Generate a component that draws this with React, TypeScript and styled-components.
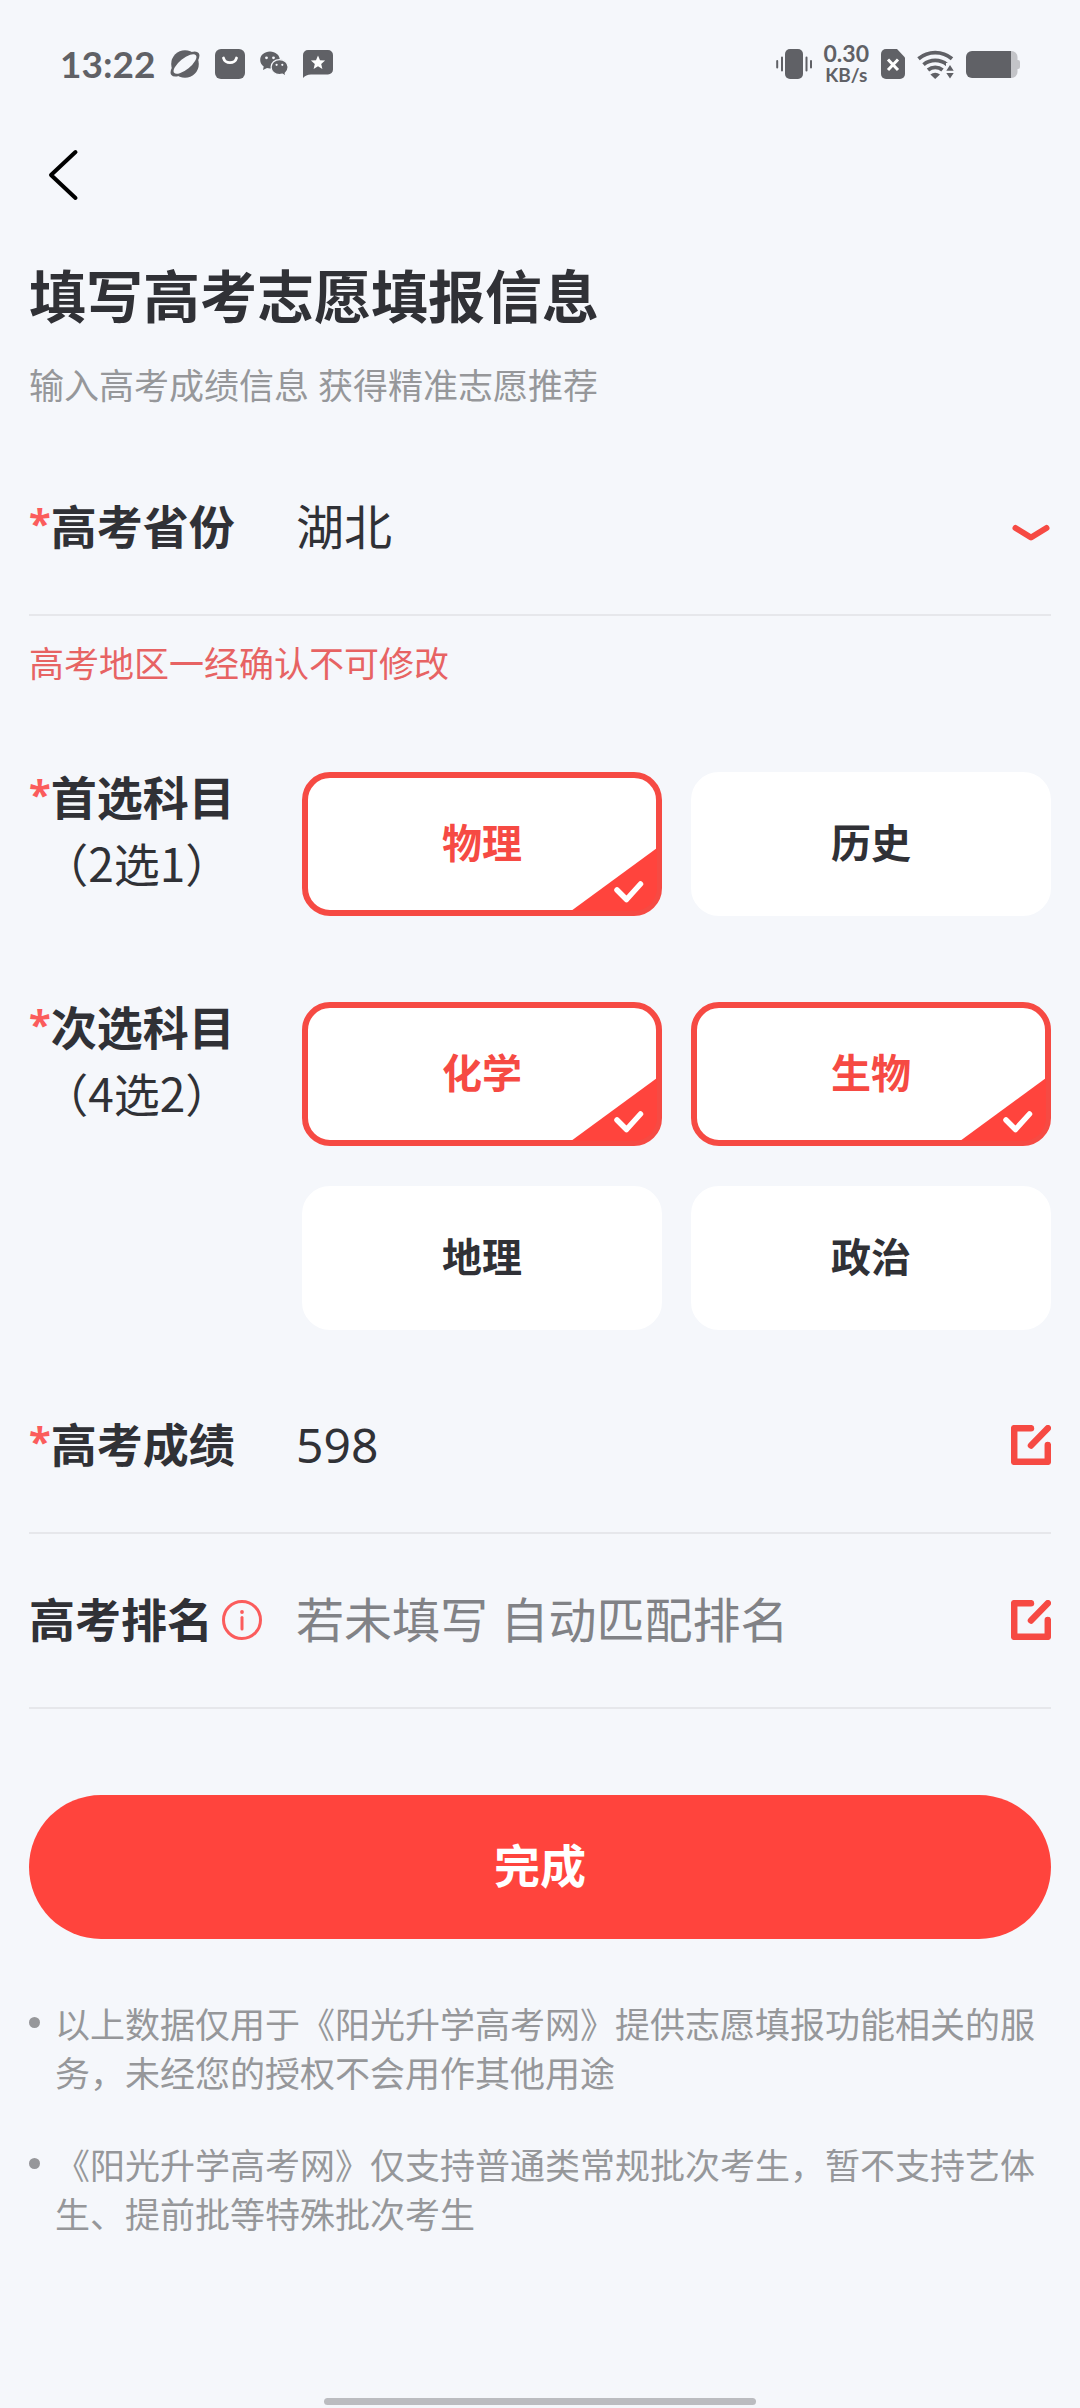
import React, { useRef, useState } from "react";
import styled, { createGlobalStyle } from "styled-components";

const color = {
  page: "#f5f7fb",
  ink: "#303136",
  muted: "#96979a",
  placeholder: "#818286",
  status: "#606166",
  line: "#e6e7eb",
  brand: "#ff443d",
  outline: "#f64a43",
  star: "#fb5c5c",
  warning: "#e76363",
};

const GlobalStyle = createGlobalStyle`
  *, *::before, *::after { box-sizing: border-box; }
  body {
    margin: 0;
    background: ${color.page};
    color: ${color.ink};
    font-family: "Noto Sans", "Noto Sans CJK SC", sans-serif;
  }
  button, input, select { font: inherit; color: inherit; }
`;

const Page = styled.div`
  display: flex;
  flex-direction: column;
  min-height: 100vh;
`;

const StatusBar = styled.div`
  display: flex;
  align-items: center;
  justify-content: space-between;
  height: 128px;
  padding: 0 60px;
  color: ${color.status};
  font-family: Lato, "Noto Sans", sans-serif;
  font-weight: 700;
`;

const StatusGroup = styled.div<{ $gap: number }>`
  display: flex;
  align-items: center;
  gap: ${(p) => p.$gap}px;

  svg { display: block; }
`;

const Clock = styled.time`
  font-size: 37px;
  line-height: 40px;
`;

const NetSpeed = styled.div`
  display: flex;
  flex-direction: column;
  align-items: center;
`;

const SpeedValue = styled.span`
  font-size: 23px;
  line-height: 21px;
`;

const SpeedUnit = styled.span`
  font-size: 19px;
  line-height: 21px;
`;

const NavBar = styled.nav`
  display: flex;
  align-items: center;
  height: 94px;
  padding: 0 40px;
`;

const IconButton = styled.button`
  display: block;
  flex: none;
  padding: 0;
  border: 0;
  background: none;
  cursor: pointer;

  svg { display: block; }
`;

const Content = styled.main`
  padding: 34px 29px 0;
`;

const Title = styled.h1`
  margin: 0;
  font-size: 57px;
  line-height: 80px;
  font-weight: 700;
`;

const Subtitle = styled.p`
  margin: 24px 0 0;
  font-size: 35px;
  line-height: 52px;
  color: ${color.muted};
`;

const Form = styled.form`
  margin: 29px 0 0;
`;

const Row = styled.div`
  display: flex;
  align-items: center;
  height: 175px;
  padding-bottom: 2px;
  border-bottom: 2px solid ${color.line};
`;

const LabelCell = styled.div`
  display: flex;
  flex: none;
  align-items: center;
  gap: 9px;
  width: 267px;
`;

const Label = styled.label`
  font-size: 46px;
  line-height: 65px;
  font-weight: 700;
`;

const Star = styled.span`
  font-size: 40px;
  line-height: 40px;
  vertical-align: 6px;
  color: ${color.star};
`;

const fieldStyle = `
  flex: 1;
  min-width: 0;
  height: 72px;
  padding: 0;
  border: 0;
  outline: 0;
  background: transparent;
  font-size: 48px;
  line-height: 72px;
`;

const Field = styled.input`
  ${fieldStyle}
  &::placeholder { color: ${color.placeholder}; opacity: 1; }
`;

const Picker = styled.div`
  position: relative;
  display: flex;
  flex: 1;
  align-items: center;
`;

const Select = styled.select`
  ${fieldStyle}
  appearance: none;
`;

const Chevron = styled.svg`
  position: absolute;
  right: 0;
  top: 21px;
  pointer-events: none;
`;

const Warning = styled.p`
  margin: 22px 0 0;
  font-size: 35px;
  line-height: 52px;
  color: ${color.warning};
`;

const SubjectGroup = styled.fieldset<{ $top: number }>`
  display: grid;
  grid-template-columns: 273px 1fr;
  margin: ${(p) => p.$top}px 0 0;
  padding: 0;
  border: 0;
`;

const SubjectLabel = styled.div`
  justify-self: start;
  display: flex;
  flex-direction: column;
  align-items: center;
  margin-top: -7px;
  font-size: 46px;
  line-height: 65px;
`;

const GroupName = styled.span`
  font-weight: 700;
`;

const GroupHint = styled.span`
  padding-left: 10px;
  font-family: "Noto Sans CJK SC", sans-serif;
`;

const Options = styled.div`
  display: grid;
  grid-template-columns: 1fr 1fr;
  gap: 40px 29px;
`;

const Option = styled.label<{ $checked: boolean }>`
  position: relative;
  display: flex;
  align-items: center;
  justify-content: center;
  height: 144px;
  padding-bottom: 2px;
  border: 6px solid ${(p) => (p.$checked ? color.outline : "#ffffff")};
  border-radius: 28px;
  background: #ffffff;
  color: ${(p) => (p.$checked ? color.outline : color.ink)};
  font-size: 40px;
  line-height: 56px;
  font-weight: 700;
  cursor: pointer;
`;

const OptionInput = styled.input`
  position: absolute;
  inset: 0;
  width: 100%;
  height: 100%;
  margin: 0;
  opacity: 0;
`;

const Corner = styled.svg`
  position: absolute;
  right: -1px;
  bottom: -1px;
  border-bottom-right-radius: 23px;
`;

const ScoreRows = styled.div`
  margin-top: 29px;
`;

const Submit = styled.button`
  display: block;
  width: 100%;
  height: 144px;
  margin-top: 86px;
  padding: 0 0 4px;
  border: 0;
  border-radius: 72px;
  background: ${color.brand};
  color: #ffffff;
  font-size: 46px;
  line-height: 65px;
  font-weight: 700;
  cursor: pointer;
`;

const Notes = styled.ul`
  display: flex;
  flex-direction: column;
  gap: 43px;
  margin: 61px 0 0;
  padding: 0;
  list-style: none;
`;

const Note = styled.li`
  display: flex;
  gap: 15px;
  font-size: 35px;
  line-height: 49px;
  color: ${color.muted};

  &::before {
    content: "";
    flex: none;
    width: 11px;
    height: 11px;
    margin-top: 17px;
    border-radius: 50%;
    background: currentColor;
  }
`;

const HomeBar = styled.div`
  width: 40%;
  height: 7px;
  margin: auto auto 3px;
  border-radius: 4px;
  background: #bbbcc0;
`;

const PlanetIcon = () => (
  <svg width="30" height="30" viewBox="0 0 30 30">
    <circle cx="15" cy="15" r="13.8" fill="currentColor" />
    <g transform="rotate(-39 15 15)">
      <ellipse cx="15" cy="15" rx="17.5" ry="7.6" fill="currentColor" />
      <ellipse cx="15" cy="15" rx="14" ry="5.6" fill={color.page} />
    </g>
  </svg>
);

const BagIcon = () => (
  <svg width="30" height="30" viewBox="0 0 30 30">
    <rect width="30" height="30" rx="6" fill="currentColor" />
    <path d="M8.500 9a6.600 5.600 0 0 0 13 0" fill="none" stroke="#fff" strokeWidth="2.8" strokeLinecap="round" />
  </svg>
);

const WechatIcon = () => (
  <svg width="28" height="26" viewBox="0 0 28 26">
    <path d="M10 .6C4.500.6.2 4.200.2 8.900c0 2.700 1.400 5 3.500 6.500L3 19l4-2c1 .3 2 .4 3 .4 5.400 0 9.800-3.800 9.800-8.500S15.400.6 10 .6z" fill="currentColor" />
    <path d="M19.500 8.600c-4.800 0-8.400 3.300-8.400 7.500s3.600 7.500 8.400 7.500c1 0 2-.2 2.900-.4l3.600 2-.8-3c1.800-1.400 2.900-3.600 2.900-6.100 0-4.200-3.800-7.500-8.600-7.500z" fill="currentColor" stroke={color.page} strokeWidth="1.2" />
    <g fill={color.page}>
      <circle cx="6.5" cy="6.8" r="1.4" />
      <circle cx="13.5" cy="6.8" r="1.4" />
      <circle cx="16.6" cy="13.8" r="1.1" />
      <circle cx="22.3" cy="13.8" r="1.1" />
    </g>
  </svg>
);

const StarChatIcon = () => (
  <svg width="30" height="28" viewBox="0 0 30 28">
    <path d="M0 28V5a5 5 0 0 1 5-5h20a5 5 0 0 1 5 5v14.500a5 5 0 0 1-5 5H8C4.500 24.500 2 26 0 28z" fill="currentColor" />
    <path d="M15 5.500l2 4.700 5.100.4-3.900 3.300 1.200 5-4.400-2.700-4.400 2.700 1.200-5-3.900-3.300 5.100-.4z" fill="#fff" />
  </svg>
);

const VibrateIcon = () => (
  <svg width="36" height="30" viewBox="0 0 36 30">
    <rect x="9" y="0" width="18" height="30" rx="5" fill="currentColor" />
    <g fill="none" stroke="currentColor" strokeWidth="2" strokeLinecap="round">
      <path d="M6 8.500v13M1.200 12v6.500M30.500 8.500v13M35 12v6.500" />
    </g>
  </svg>
);

const SimIcon = () => (
  <svg width="24" height="30" viewBox="0 0 24 30">
    <path d="M5 0h11l8 8.500V25a5 5 0 0 1-5 5H5a5 5 0 0 1-5-5V5a5 5 0 0 1 5-5z" fill="currentColor" />
    <path d="M7 10.500l10 10.500M17 10.500l-10 10.500" stroke="#fff" strokeWidth="3" />
  </svg>
);

const WifiIcon = () => (
  <svg width="37" height="29" viewBox="0 0 37 29">
    <g fill="none" stroke="currentColor" strokeWidth="3.8">
      <path d="M1.500 8.800a26 26 0 0 1 33.500 0" />
      <path d="M6.500 14.600a18.500 18.500 0 0 1 23.500 0" />
      <path d="M11 20a11.500 11.500 0 0 1 14.500 0" />
    </g>
    <path d="M18.200 29l-4.800-4.500a7.500 7.500 0 0 1 9.600 0z" fill="currentColor" />
    <path d="M29 13h8v16h-8z" fill={color.page} />
    <path d="M33 15l3.700 5.800h-7.400zM33 28.500l3.700-5.500h-7.400z" fill="currentColor" />
  </svg>
);

const BatteryIcon = () => (
  <svg width="54" height="27" viewBox="0 0 54 27">
    <path d="M44 0h1.500a6 6 0 0 1 6 6v3h.5a2 2 0 0 1 2 2v5a2 2 0 0 1-2 2h-.5v3a6 6 0 0 1-6 6H44z" fill="#c3c4c8" />
    <path d="M6 0h39v27H6a6 6 0 0 1-6-6V6a6 6 0 0 1 6-6z" fill="currentColor" />
  </svg>
);

const EditIcon = () => (
  <svg width="40" height="40" viewBox="0 0 40 40" fill="none" stroke={color.outline} strokeWidth="6.5" strokeLinecap="round" strokeLinejoin="round">
    <path d="M20 3.200H3.200v33.600h33.600V20" />
    <path d="M20 20.500L36.800 3.200" />
  </svg>
);

const InfoIcon = () => (
  <svg width="40" height="40" viewBox="0 0 40 40" fill="none" stroke={color.star}>
    <circle cx="20" cy="20" r="18.5" strokeWidth="3" />
    <path d="M20 17.500v11.500" strokeWidth="3" strokeLinecap="round" />
    <circle cx="20" cy="12" r="1.9" fill={color.star} stroke="none" />
  </svg>
);

const CheckCorner = () => (
  <Corner width="86" height="63" viewBox="0 0 86 63" aria-hidden="true">
    <path d="M86 0v63H0z" fill={color.brand} />
    <path d="M46 42l9.500 9.500 14-15.500" fill="none" stroke="#fff" strokeWidth="5.5" strokeLinecap="round" strokeLinejoin="round" />
  </Corner>
);

type ChoiceProps = {
  type: "radio" | "checkbox";
  name: string;
  text: string;
  checked: boolean;
  onPick: () => void;
};

const Choice = ({ type, name, text, checked, onPick }: ChoiceProps) => (
  <Option $checked={checked}>
    <OptionInput type={type} name={name} value={text} checked={checked} onChange={onPick} />
    {text}
    {checked && <CheckCorner />}
  </Option>
);

const FIRST = ["物理", "历史"];
const SECOND = ["化学", "生物", "地理", "政治"];
const SECOND_LIMIT = 2;

export default function App() {
  const [first, setFirst] = useState("物理");
  const [second, setSecond] = useState<string[]>(["化学", "生物"]);
  const [score, setScore] = useState("598");
  const [rank, setRank] = useState("");
  const scoreRef = useRef<HTMLInputElement>(null);
  const rankRef = useRef<HTMLInputElement>(null);

  const toggleSecond = (name: string) =>
    setSecond((list) =>
      list.includes(name)
        ? list.filter((n) => n !== name)
        : list.length < SECOND_LIMIT
          ? [...list, name]
          : list
    );

  return (
    <Page>
      <GlobalStyle />
      <StatusBar>
        <StatusGroup $gap={15}>
          <Clock>13:22</Clock>
          <PlanetIcon />
          <BagIcon />
          <WechatIcon />
          <StarChatIcon />
        </StatusGroup>
        <StatusGroup $gap={12}>
          <VibrateIcon />
          <NetSpeed>
            <SpeedValue>0.30</SpeedValue>
            <SpeedUnit>KB/s</SpeedUnit>
          </NetSpeed>
          <SimIcon />
          <WifiIcon />
          <BatteryIcon />
        </StatusGroup>
      </StatusBar>

      <NavBar>
        <IconButton type="button" aria-label="返回">
          <svg width="48" height="60" viewBox="0 0 48 60" fill="none" stroke="#000" strokeWidth="4" strokeLinecap="round" strokeLinejoin="round">
            <path d="M35.500 7L11 30l24.500 23" />
          </svg>
        </IconButton>
      </NavBar>

      <Content>
        <Title>填写高考志愿填报信息</Title>
        <Subtitle>输入高考成绩信息 获得精准志愿推荐</Subtitle>

        <Form onSubmit={(e) => e.preventDefault()}>
          <Row>
            <LabelCell>
              <Label htmlFor="province"><Star>*</Star>高考省份</Label>
            </LabelCell>
            <Picker>
              <Select id="province" defaultValue="湖北">
                <option>湖北</option>
              </Select>
              <Chevron width="40" height="40" viewBox="0 0 40 40" fill="none" stroke={color.outline} strokeWidth="6" strokeLinecap="round" strokeLinejoin="round">
                <path d="M4.500 16L20 25.500 35.500 16" />
              </Chevron>
            </Picker>
          </Row>
          <Warning>高考地区一经确认不可修改</Warning>

          <SubjectGroup $top={82} aria-label="首选科目">
            <SubjectLabel>
              <GroupName><Star>*</Star>首选科目</GroupName>
              <GroupHint>（2选1）</GroupHint>
            </SubjectLabel>
            <Options>
              {FIRST.map((s) => (
                <Choice key={s} type="radio" name="first" text={s} checked={first === s} onPick={() => setFirst(s)} />
              ))}
            </Options>
          </SubjectGroup>

          <SubjectGroup $top={86} aria-label="次选科目">
            <SubjectLabel>
              <GroupName><Star>*</Star>次选科目</GroupName>
              <GroupHint>（4选2）</GroupHint>
            </SubjectLabel>
            <Options>
              {SECOND.map((s) => (
                <Choice key={s} type="checkbox" name="second" text={s} checked={second.includes(s)} onPick={() => toggleSecond(s)} />
              ))}
            </Options>
          </SubjectGroup>

          <ScoreRows>
            <Row>
              <LabelCell>
                <Label htmlFor="score"><Star>*</Star>高考成绩</Label>
              </LabelCell>
              <Field id="score" inputMode="numeric" value={score} onChange={(e) => setScore(e.target.value)} ref={scoreRef} />
              <IconButton type="button" aria-label="编辑成绩" onClick={() => scoreRef.current?.focus()}>
                <EditIcon />
              </IconButton>
            </Row>
            <Row>
              <LabelCell>
                <Label htmlFor="rank">高考排名</Label>
                <IconButton type="button" aria-label="排名说明">
                  <InfoIcon />
                </IconButton>
              </LabelCell>
              <Field id="rank" inputMode="numeric" placeholder="若未填写 自动匹配排名" value={rank} onChange={(e) => setRank(e.target.value)} ref={rankRef} />
              <IconButton type="button" aria-label="编辑排名" onClick={() => rankRef.current?.focus()}>
                <EditIcon />
              </IconButton>
            </Row>
          </ScoreRows>

          <Submit type="submit">完成</Submit>
        </Form>

        <Notes>
          <Note>以上数据仅用于《阳光升学高考网》提供志愿填报功能相关的服务，未经您的授权不会用作其他用途</Note>
          <Note>《阳光升学高考网》仅支持普通类常规批次考生，暂不支持艺体生、提前批等特殊批次考生</Note>
        </Notes>
      </Content>

      <HomeBar />
    </Page>
  );
}
